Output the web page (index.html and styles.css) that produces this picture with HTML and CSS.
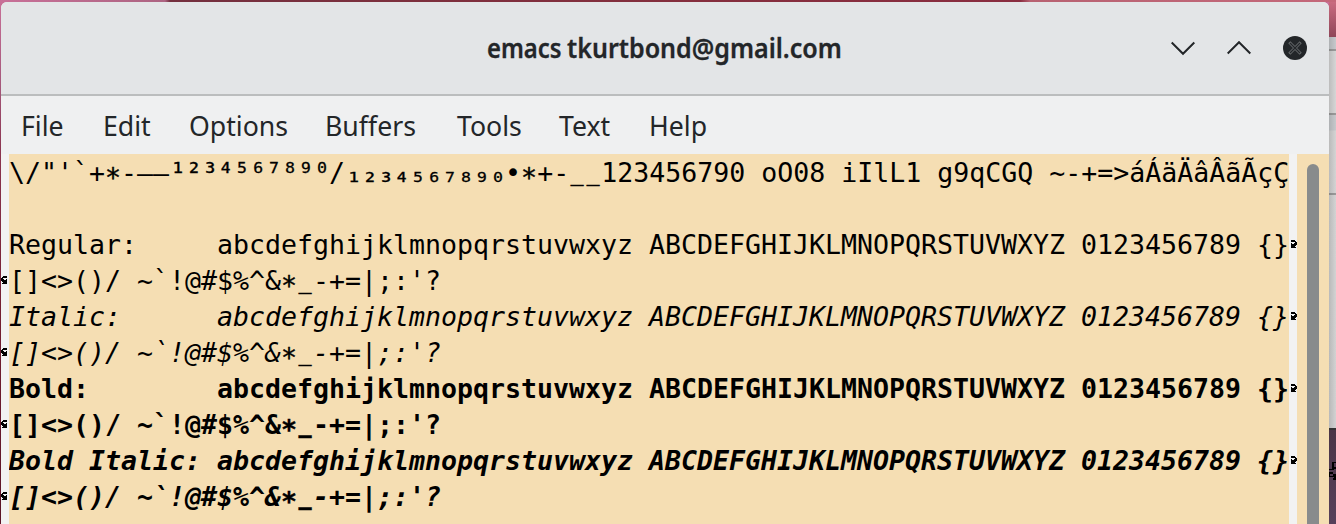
FILE: index.html
```html
<!DOCTYPE html>
<html lang="en">
<head>
<meta charset="utf-8">
<title>emacs tkurtbond@gmail.com</title>
<link rel="stylesheet" href="styles.css">
</head>
<body>
<svg width="0" height="0" class="defs">
  <symbol id="wrap-out" viewBox="0 0 8 8"><path d="M2 0h4v1H2zM2 1h5v1H2zM6 2h2v1H6zM2 3h1v1H2zM5 3h3v1H5zM2 4h6v1H2zM2 5h5v1H2zM2 6h4v1H2zM2 7h5v1H2z"/></symbol>
</svg>
<div class="desktop">
  <main class="window">
    <header class="titlebar">
      <span></span>
      <h1 class="title"><span class="app">emacs</span> <span class="account">tkurtbond@gmail.com</span></h1>
      <div class="controls">
        <svg width="24" height="24" viewBox="0 0 24 24"><path class="stroke" d="M.7 6.5 12 17.8 23.3 6.5"/></svg>
        <svg width="24" height="24" viewBox="0 0 24 24"><path class="stroke" d="M.7 17.5 12 6.2 23.3 17.5"/></svg>
        <svg width="24" height="24" viewBox="0 0 24 24"><circle cx="12" cy="12" r="12" fill="#232629"/><path d="M6.3 6.3l11.4 11.4M17.7 6.3L6.3 17.7" stroke="#686b6d" stroke-width="3"/><path d="M7 7l10 10M17 7L7 17" stroke="#232629" stroke-width="1.3"/></svg>
      </div>
    </header>
    <nav class="menu">
      <span class="w-file">File</span><span class="w-edit">Edit</span><span class="w-options">Options</span><span class="w-buffers">Buffers</span><span class="w-tools">Tools</span><span class="w-text">Text</span><span class="w-help">Help</span>
    </nav>
    <section class="editor">
      <div class="fringe left">
        <i></i><i></i><i></i>
        <svg><use href="#wrap-out"/></svg><i></i><svg><use href="#wrap-out"/></svg><i></i><svg><use href="#wrap-out"/></svg><i></i><svg><use href="#wrap-out"/></svg>
      </div>
      <div class="buffer">
        <div class="line">\/"'`+<span class="star">*</span>-–—<span class="small">¹²³⁴⁵⁶⁷⁸⁹⁰</span>/<span class="small">₁₂₃₄₅₆₇₈₉₀</span>•<span class="star">*</span>+-<span class="under">_</span><span class="under">_</span>123456790 oO08 iIlL1 g9qCGQ ~-+=&gt;áÁäÄâÂãÃçÇ</div>
        <div class="line"></div>
        <div class="line">Regular:     abcdefghijklmnopqrstuvwxyz ABCDEFGHIJKLMNOPQRSTUVWXYZ 0123456789 {}</div>
        <div class="line">[]&lt;&gt;()/ ~`!@#$%^&amp;<span class="star">*</span><span class="under">_</span>-+=|;:'?</div>
        <div class="line italic">Italic:      abcdefghijklmnopqrstuvwxyz ABCDEFGHIJKLMNOPQRSTUVWXYZ 0123456789 {}</div>
        <div class="line italic">[]&lt;&gt;()/ ~`!@#$%^&amp;<span class="star">*</span><span class="under">_</span>-+=|;:'?</div>
        <div class="line bold">Bold:        abcdefghijklmnopqrstuvwxyz ABCDEFGHIJKLMNOPQRSTUVWXYZ 0123456789 {}</div>
        <div class="line bold">[]&lt;&gt;()/ ~`!@#$%^&amp;<span class="star">*</span><span class="under">_</span>-+=|;:'?</div>
        <div class="line bold italic">Bold Italic: abcdefghijklmnopqrstuvwxyz ABCDEFGHIJKLMNOPQRSTUVWXYZ 0123456789 {}</div>
        <div class="line bold italic">[]&lt;&gt;()/ ~`!@#$%^&amp;<span class="star">*</span><span class="under">_</span>-+=|;:'?</div>
      </div>
      <div class="fringe right">
        <i></i><i></i><svg><use href="#wrap-out"/></svg><i></i><svg><use href="#wrap-out"/></svg><i></i><svg><use href="#wrap-out"/></svg><i></i><svg><use href="#wrap-out"/></svg><i></i>
      </div>
      <div class="scroll"><div class="thumb"></div></div>
    </section>
  </main>
  <aside class="behind">
    <svg width="7" height="20" viewBox="0 0 7 20"><path d="M3 0h4v1H5v4h2v2H5v1H0v2h4v2H1v2h3v-2h3v6H4v-2h1v-1H0V7h3z"/></svg>
  </aside>
</div>
</body>
</html>
```
FILE: styles.css
```css
* { box-sizing: border-box; }
body { margin: 0; overflow: hidden; }
.defs { position: absolute; }
.desktop {
  width: 1336px; height: 524px; padding: 2px 0 0 1px; display: flex;
  background:
    linear-gradient(90deg, #c87098 0, #ad6482 165px, #74303f 170px, #7d303e 400px, #852e3e 700px, #8a2d40 1020px, #b86272 1030px, #c4687a 1336px) 0 0 / 100% 2px no-repeat,
    linear-gradient(#c87098, #a5587b 85px, #8b3550 150px, #762033 300px, #5b1426 524px);
}
.window {
  width: 1328px; height: 522px; display: flex; flex-direction: column;
  background: #eff0f1; border-radius: 6px 6px 0 0; overflow: hidden;
}
.titlebar {
  height: 94px; flex: none; display: grid; grid-template-columns: 1fr auto 1fr;
  align-items: center; background: #e3e5e7; border-bottom: 2px solid #bbbdbe;
}
.title {
  margin: 0; width: 356px; font: 600 26.67px/36px "Noto Sans", sans-serif;
  color: #232629; white-space: nowrap; display: flex; gap: 5px;
  -webkit-text-stroke: .3px #232629;
}
.title span { flex: none; transform-origin: left; }
.title .app { width: 75px; transform: scaleX(.895); }
.title .account { transform: scaleX(.94); }
.controls { display: flex; gap: 32px; justify-content: flex-end; padding-right: 22px; }
.stroke { fill: none; stroke: #232629; stroke-width: 2; }
.menu {
  height: 58px; flex: none; display: flex; padding: 0 0 0 20px;
  font: 26.67px/60px "Noto Sans", sans-serif; color: #232629; background: #eff0f1;
}
.w-file { width: 82px; } .w-edit { width: 86px; } .w-options { width: 136px; }
.w-buffers { width: 132px; } .w-tools { width: 102px; } .w-text { width: 90px; }
.editor { flex: 1; display: flex; min-height: 0; background: #f5deb3; }
.fringe { width: 8px; flex: none; background: #f2f2f2; display: flex; flex-direction: column; }
.fringe i, .fringe svg { display: block; width: 8px; height: 36px; flex: none; }
.fringe svg { padding: 14px 0; shape-rendering: crispEdges; }
.left svg { transform: scaleX(-1); }
.buffer { width: 1280px; flex: none; color: #000; overflow: hidden; }
.line {
  height: 36px; white-space: pre; font: 26.58px/38px "DejaVu Sans Mono", monospace;
  font-variant-ligatures: none;
}
.small { position: relative; left: 1px; -webkit-text-stroke: .3px #000; }
.star { position: relative; top: 5px; -webkit-text-stroke: .4px #000; }
.under { display: inline-block; transform: translateY(-2px) scaleX(.82); -webkit-text-stroke: .4px #000; }
.italic { font-style: italic; }
.bold { font-weight: 700; }
.scroll { width: 32px; padding: 10px 10px 0; display: flex; }
.thumb { width: 12px; background: #888b8c; border-radius: 6px 6px 0 0; }
.behind {
  width: 7px; height: 522px; padding-top: 460px;
  background:
    linear-gradient(90deg, rgba(0,0,0,.12), rgba(0,0,0,0)) 0 35px / 7px 391px no-repeat,
    linear-gradient(#9b9b9b, #9b9b9b) 0 47px / 7px 2px no-repeat,
    linear-gradient(#9b9b9b, #9b9b9b) 0 111px / 7px 2px no-repeat,
    linear-gradient(#9b9b9b, #9b9b9b) 0 191px / 7px 2px no-repeat,
    linear-gradient(#c96b80, #8f4658 35px, #c6c9cc 35px, #c6c9cc 47px, #d6d6d6 49px, #d6d6d6 111px, #c6c9cc 113px, #c6c9cc 128px, #d4d4d4 129px, #d2d2d2 426px, #333 426px, #333 428px, #4a3547 428px, #56405a 522px);
}
.behind svg { display: block; }
```
